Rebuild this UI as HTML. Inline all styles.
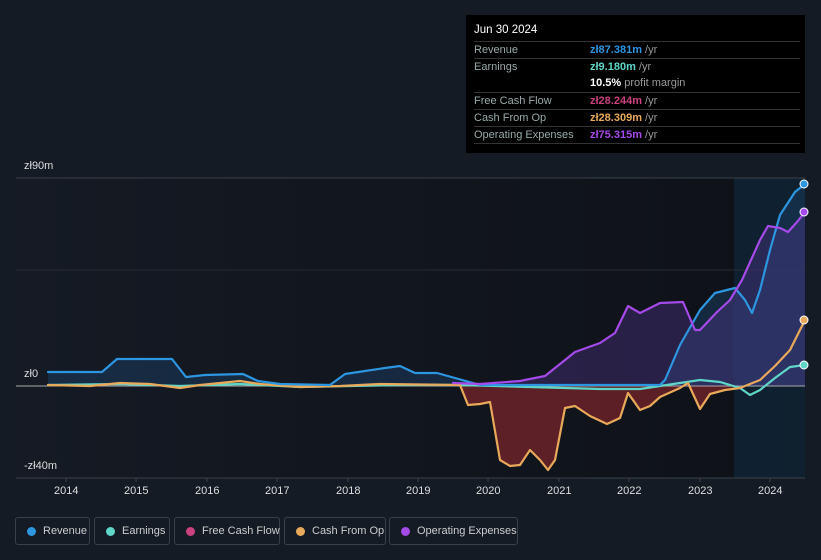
<!DOCTYPE html><html><head><meta charset="utf-8"><style>
html,body{margin:0;width:821px;height:560px;overflow:hidden}
body{background:#151b25;font-family:"Liberation Sans",sans-serif;position:relative;color:#ccc}
.t{position:absolute;font-size:11px;color:#ddd}
.tip{position:absolute;left:466px;top:15px;width:339px;height:138px;background:#000;}
.row{position:absolute;left:8px;width:326px;height:17px;border-top:1px solid #333;font-size:11px;line-height:16px;color:#9aa;white-space:nowrap}
.row span{position:absolute;left:116px;color:#999}
.row b{font-weight:bold}
.leg{position:absolute;top:517px;height:28px;border:1px solid #3a3f48;border-radius:3px;font-size:11px;color:#ccc;line-height:26px;box-sizing:border-box;white-space:nowrap}
.leg i{position:absolute;left:11px;top:9px;width:9px;height:9px;border-radius:50%}
.leg span{position:absolute;left:27px}
</style></head><body>
<svg width="821" height="560" style="position:absolute;left:0;top:0">
<defs><linearGradient id="bg" x1="0" x2="1"><stop offset="0" stop-color="#151a24"/><stop offset="1" stop-color="#0e1117"/></linearGradient></defs>
<rect x="16" y="178" width="789" height="300" fill="url(#bg)"/>
<rect x="734" y="178" width="71" height="300" fill="#10283a" opacity="0.7"/>
<line x1="16" y1="178" x2="805" y2="178" stroke="#3a3f47"/>
<line x1="16" y1="270" x2="805" y2="270" stroke="#262b33"/>
<line x1="16" y1="478" x2="805" y2="478" stroke="#3a3f47"/>
<g stroke="#3a3f47"><line x1="66" y1="478" x2="66" y2="482"/><line x1="136" y1="478" x2="136" y2="482"/><line x1="207" y1="478" x2="207" y2="482"/><line x1="277" y1="478" x2="277" y2="482"/><line x1="348" y1="478" x2="348" y2="482"/><line x1="418" y1="478" x2="418" y2="482"/><line x1="488" y1="478" x2="488" y2="482"/><line x1="559" y1="478" x2="559" y2="482"/><line x1="629" y1="478" x2="629" y2="482"/><line x1="700" y1="478" x2="700" y2="482"/><line x1="770" y1="478" x2="770" y2="482"/></g>
<path d="M48,372 L102,372 117,359 172,359 186,377 205,375 243,374 258,381 280,384 330,385 345,374 365,371 385,368 400,366 415,373 437,373 455,378 480,385 660,385 665,380 680,345 700,310 715,293 735,288 745,300 752,313 760,290 770,250 780,215 795,192 805,184 L805,386 48,386Z" fill="#1a3a5c" opacity="0.55"/>
<path d="M453,383 L480,384 520,381 545,376 560,364 575,352 600,343 615,333 628,306 640,313 660,303 683,302 695,330 700,330 717,312 730,300 742,280 760,240 768,226 780,228 788,232 797,222 805,212 L805,386 453,386Z" fill="#5a3a9a" opacity="0.35"/>
<path d="M460,386 468,405 480,404 490,402 500,460 510,466 520,465 530,450 540,460 548,470 555,460 565,408 575,406 590,416 607,424 620,418 628,393 640,410 650,406 660,397 680,388 688,386 700,409 710,394 725,390 740,386Z" fill="#6a2228" opacity="0.85"/>
<line x1="16" y1="386" x2="805" y2="386" stroke="#aaa" stroke-width="1"/>
<g fill="none" stroke-width="2.2" stroke-linejoin="round" stroke-linecap="round">
<path d="M48,385 L120,384 180,386 240,384 300,387 400,385 460,385 600,389 640,389 680,383 700,380 720,382 740,388 750,395 760,390 775,378 790,367 805,365" stroke="#5fd6c8"/>
<path d="M48,385 L90,386 120,383 150,384 180,388 200,385 240,381 260,384 300,387 340,386 380,384 460,385 468,405 480,404 490,402 500,460 510,466 520,465 530,450 540,460 548,470 555,460 565,408 575,406 590,416 607,424 620,418 628,393 640,410 650,406 660,397 680,388 688,383 700,409 710,394 725,390 740,388 760,380 775,366 790,350 805,320" stroke="#e8a95a"/>
<path d="M48,372 L102,372 117,359 172,359 186,377 205,375 243,374 258,381 280,384 330,385 345,374 365,371 385,368 400,366 415,373 437,373 455,378 480,385 660,385 665,380 680,345 700,310 715,293 735,288 745,300 752,313 760,290 770,250 780,215 795,192 805,184" stroke="#2d96e0"/>
<path d="M453,383 L480,384 520,381 545,376 560,364 575,352 600,343 615,333 628,306 640,313 660,303 683,302 695,330 700,330 717,312 730,300 742,280 760,240 768,226 780,228 788,232 797,222 805,212" stroke="#a44ae8"/>
</g>
<circle cx="804" cy="184" r="4" fill="#2d96e0" stroke="#fff" stroke-width="1"/>
<circle cx="804" cy="212" r="4" fill="#a44ae8" stroke="#fff" stroke-width="1"/>
<circle cx="804" cy="320" r="4" fill="#e8a95a" stroke="#fff" stroke-width="1"/>
<circle cx="804" cy="365" r="4" fill="#5fd6c8" stroke="#fff" stroke-width="1"/>
</svg>
<div class="t" style="left:24px;top:160px">zł90m</div>
<div class="t" style="left:24px;top:368px">zł0</div>
<div class="t" style="left:24px;top:460px">-zł40m</div>
<div class="t" style="left:54px;top:485px">2014</div><div class="t" style="left:124px;top:485px">2015</div><div class="t" style="left:195px;top:485px">2016</div><div class="t" style="left:265px;top:485px">2017</div><div class="t" style="left:336px;top:485px">2018</div><div class="t" style="left:406px;top:485px">2019</div><div class="t" style="left:476px;top:485px">2020</div><div class="t" style="left:547px;top:485px">2021</div><div class="t" style="left:617px;top:485px">2022</div><div class="t" style="left:688px;top:485px">2023</div><div class="t" style="left:758px;top:485px">2024</div>
<div class="tip">
<div style="position:absolute;left:8px;top:9px;font-size:11.5px;color:#fff">Jun 30 2024</div>
<div class="row" style="top:26px">Revenue<span><b style="color:#2d96e0">zł87.381m</b> /yr</span></div>
<div class="row" style="top:43px">Earnings<span><b style="color:#5fd6c8">zł9.180m</b> /yr</span></div>
<div class="row" style="top:60px;border-top:none"><span><b style="color:#fff">10.5%</b> profit margin</span></div>
<div class="row" style="top:77px">Free Cash Flow<span><b style="color:#c9417f">zł28.244m</b> /yr</span></div>
<div class="row" style="top:94px">Cash From Op<span><b style="color:#e8a95a">zł28.309m</b> /yr</span></div>
<div class="row" style="top:111px">Operating Expenses<span><b style="color:#a44ae8">zł75.315m</b> /yr</span></div>
<div class="row" style="top:128px;height:1px"></div>
</div>
<div class="leg" style="left:15px;width:75px"><i style="background:#2d96e0"></i><span>Revenue</span></div>
<div class="leg" style="left:94px;width:76px"><i style="background:#5fd6c8"></i><span>Earnings</span></div>
<div class="leg" style="left:174px;width:106px"><i style="background:#c9417f"></i><span>Free Cash Flow</span></div>
<div class="leg" style="left:284px;width:102px"><i style="background:#e8a95a"></i><span>Cash From Op</span></div>
<div class="leg" style="left:389px;width:129px"><i style="background:#a44ae8"></i><span>Operating Expenses</span></div>
</body></html>
